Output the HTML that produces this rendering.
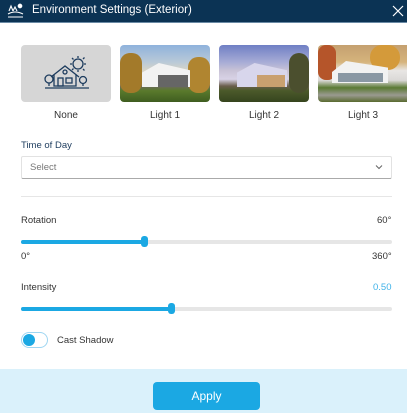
<!DOCTYPE html>
<html><head><style>
*{margin:0;padding:0;box-sizing:border-box}
body{width:407px;height:413px;overflow:hidden;background:#fff;font-family:"Liberation Sans",sans-serif;position:relative;color:#333}
.hdr{position:absolute;left:0;top:0;width:407px;height:23px;background:#0b3354;border-bottom:1px solid #6a8aa5}
.hdr .t{position:absolute;left:32px;top:4px;color:#fff;font-size:11.5px}
.a{position:absolute}
.th{position:absolute;top:45px;width:90px;height:57px;border-radius:4px;overflow:hidden}
.lbl{position:absolute;top:110px;font-size:10px;color:#333;text-align:center;width:90px}
.sm{font-size:9.5px}
.track{position:absolute;height:4px;background:#e6e6e6;border-radius:2px;left:21px;width:371px}
.fill{position:absolute;height:4px;background:#1ba8e3;border-radius:2px;left:21px}
.thumb{position:absolute;width:7px;height:11px;background:#1ba8e3;border-radius:3px}
.house{position:absolute;background:#f2f2f2}
</style></head><body>
<div class="hdr">
<svg class="a" style="left:7px;top:3px" width="17" height="16" viewBox="0 0 17 16" fill="none" stroke="#fff" stroke-width="1.1"><path d="M2 8 L4 3 L6 8 M6 8 L8 4 L10 8 M1 11 Q8 7 16 11 M1 14 H16"/><circle cx="13" cy="3" r="1.8" fill="#fff"/></svg>
<div class="t">Environment Settings (Exterior)</div>
<svg class="a" style="left:392px;top:5px" width="12" height="12" viewBox="0 0 12 12" stroke="#fff" stroke-width="1.2"><path d="M1 1L11 11M11 1L1 11"/></svg>
</div>
<div class="th" style="left:21px;background:#d6d6d6">
<svg class="a" style="left:22px;top:10px" width="48" height="36" viewBox="0 0 48 36" fill="none" stroke="#1d3c5e" stroke-width="1.3"><circle cx="35" cy="9" r="5"/><path d="M35 1v2M35 15v2M27 9h2M41 9h2M29 3l1.5 1.5M40 14l1.5 1.5M29 15l1.5-1.5M40 4l1.5-1.5"/><path d="M8 22 L22 11 L36 22 M11 20 V31 H33 V20"/><rect x="15" y="23" width="5" height="8"/><rect x="23" y="23" width="6" height="5"/><circle cx="22" cy="17" r="2"/><circle cx="6" cy="24" r="4"/><path d="M6 28v3"/><circle cx="40" cy="25" r="3.5"/><path d="M40 28v3"/><path d="M2 33H46"/></svg>
</div>
<div class="th" style="left:120px;background:linear-gradient(180deg,#8fb2dc 0%,#b9c9d8 30%,#d8d4c6 45%,#e8e8e6 60%,#6c6a5c 72%,#5a7a2c 80%,#3f5d20 100%)"><div class="a" style="left:0;top:8px;width:22px;height:40px;background:#a37a2a;border-radius:10px"></div><div class="a" style="left:68px;top:12px;width:22px;height:36px;background:#b08530;border-radius:10px"></div><div class="house" style="left:22px;top:18px;width:48px;height:24px;clip-path:polygon(0 40%,35% 0,100% 30%,100% 100%,0 100%)"></div><div class="a" style="left:38px;top:30px;width:30px;height:12px;background:#666"></div></div>
<div class="th" style="left:219px;background:linear-gradient(180deg,#6f7fc4 0%,#a7acd6 30%,#c9c3d6 45%,#d8d2e6 60%,#6a5e4c 72%,#4b5a2a 80%,#36441e 100%)"><div class="a" style="left:70px;top:8px;width:20px;height:40px;background:#4b4f2e;border-radius:10px"></div><div class="house" style="left:18px;top:18px;width:50px;height:24px;background:#d8d6ec;clip-path:polygon(0 40%,35% 0,100% 30%,100% 100%,0 100%)"></div><div class="a" style="left:38px;top:30px;width:28px;height:12px;background:#c9a070"></div></div>
<div class="th" style="left:318px;width:89px;border-radius:4px 0 0 4px;background:linear-gradient(180deg,#c4a070 0%,#d6b47c 30%,#e8e6e4 45%,#dad8d6 62%,#5b7a34 75%,#9a9a90 88%,#5a6a30 100%)"><div class="a" style="left:0;top:0;width:18px;height:35px;background:#b5552a;border-radius:8px"></div><div class="a" style="left:52px;top:0;width:30px;height:25px;background:#d49a3a;border-radius:12px"></div><div class="house" style="left:14px;top:16px;width:56px;height:22px;clip-path:polygon(0 50%,25% 0,100% 30%,100% 100%,0 100%)"></div><div class="a" style="left:20px;top:28px;width:45px;height:9px;background:#8a98a4"></div></div>
<div class="lbl" style="left:21px">None</div>
<div class="lbl" style="left:120px">Light 1</div>
<div class="lbl" style="left:219px">Light 2</div>
<div class="lbl" style="left:318px">Light 3</div>
<div class="a sm" style="left:21px;top:140px;color:#1d3c5e">Time of Day</div>
<div class="a" style="left:21px;top:156px;width:371px;height:23px;border:1px solid #e2e2e2;border-bottom-color:#aaa;border-radius:2px"></div>
<div class="a sm" style="left:30px;top:162px;color:#777">Select</div>
<svg class="a" style="left:375px;top:164px" width="8" height="6" viewBox="0 0 8 6" fill="none" stroke="#666"><path d="M1 1.5L4 4.5L7 1.5"/></svg>
<div class="a" style="left:21px;top:196px;width:371px;height:1px;background:#e6e6e6"></div>
<div class="a sm" style="left:21px;top:215px">Rotation</div>
<div class="a sm" style="left:377px;top:215px">60°</div>
<div class="track" style="top:240px"></div><div class="fill" style="top:240px;width:124px"></div><div class="thumb" style="left:141px;top:236px"></div>
<div class="a sm" style="left:21px;top:251px">0°</div>
<div class="a sm" style="left:372px;top:251px">360°</div>
<div class="a sm" style="left:21px;top:282px">Intensity</div>
<div class="a sm" style="left:373px;top:282px;color:#3fb2e8">0.50</div>
<div class="track" style="top:307px"></div><div class="fill" style="top:307px;width:152px"></div><div class="thumb" style="left:168px;top:303px"></div>
<div class="a" style="left:21px;top:332px;width:27px;height:16px;border:1px solid #9fd6f2;border-radius:8px"></div>
<div class="a" style="left:23px;top:334px;width:12px;height:12px;background:#1ba8e3;border-radius:50%"></div>
<div class="a sm" style="left:57px;top:335px">Cast Shadow</div>
<div class="a" style="left:0;top:369px;width:407px;height:44px;background:#daf1fb"></div>
<div class="a" style="left:153px;top:382px;width:107px;height:28px;background:#1ba8e3;border-radius:4px;color:#fff;font-size:12px;text-align:center;line-height:28px">Apply</div>
</body></html>
